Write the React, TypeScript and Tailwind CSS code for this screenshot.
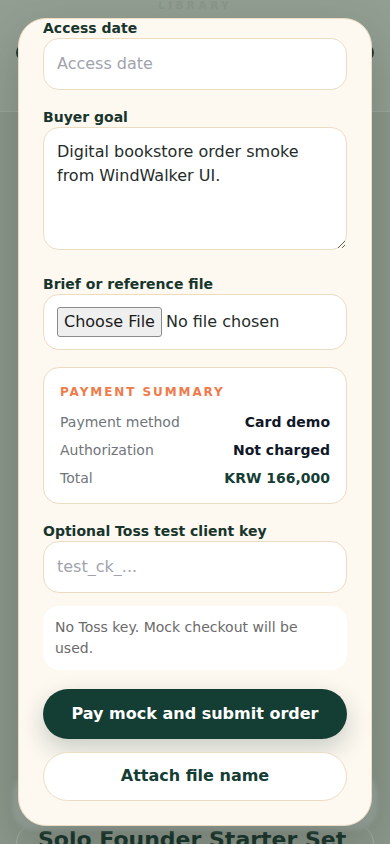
import React from "react";

const labelCls = "block text-sm font-bold leading-5 text-[#17352c]";
const fieldCls =
    "block w-full rounded-2xl border border-[#ecdcc4] bg-white px-[13px] py-[12.8px] text-base leading-6 text-[#1f2d2b] outline-none placeholder:text-[#9fa3ad]";

export default function App() {
    return (
        <div className="relative h-[844px] overflow-hidden bg-[#8b978b] font-['DejaVu_Sans',sans-serif]">
            {/* Page behind the sheet */}
            <header className="h-[114px] border-b border-[#9ba69b] bg-[#929e92] px-4">
                <p className="-mt-[2px] text-center text-[11px] font-bold leading-4 tracking-[0.28em] text-[#8a968a]">LIBRARY</p>
                <div className="mt-[30px] h-[17px] rounded-full bg-[#1f3b31]" />
            </header>
            <div className="pt-[660px]">
                <div className="mx-[13px] h-[58px] rounded-[22px] bg-[#98a49b] blur-[2px]" />
                <div className="mx-4 -mt-[6px] rounded-t-[20px] border-x border-[#a3ada4] px-[21px] pt-[2px]">
                    <h2 className="text-[22px] font-bold leading-7 text-[#1d3a30]">Solo Founder Starter Set</h2>
                </div>
            </div>

            {/* Checkout sheet */}
            <div className="absolute inset-x-0 top-0 px-[18px] pt-[18px]">
                <div className="overflow-hidden rounded-[28px] border border-[#ecdcc4] bg-[#fdf8f0] px-6 pb-6 shadow-[0_20px_50px_rgba(0,0,0,0.18)]">
                    <div className="-mt-px flex flex-col gap-[17px]">
                        <label>
                            <span className={labelCls}>Access date</span>
                            <input type="text" placeholder="Access date" className={fieldCls} />
                        </label>

                        <label>
                            <span className={labelCls}>Buyer goal</span>
                            <textarea
                                rows={4}
                                className={fieldCls + " mb-[7px]"}
                                defaultValue="Digital bookstore order smoke from WindWalker UI."
                            />
                        </label>

                        <label>
                            <span className={labelCls}>Brief or reference file</span>
                            <input
                                type="file"
                                className="block w-full rounded-2xl border border-[#ecdcc4] bg-white px-[13px] py-3 text-base leading-6 text-[#1f2d2b] file:mr-1 file:h-[30px] file:rounded-[3px] file:border file:border-[#8a8a8a] file:bg-[#efefef] file:px-1.5 file:leading-6 file:text-[#1a1a1a]"
                            />
                        </label>

                        {/* Payment summary */}
                        <div className="rounded-2xl border border-[#ecdcc4] bg-white px-4 pt-4 pb-[15px]">
                            <p className="text-xs font-bold leading-4 tracking-[0.16em] text-[#ef7b4b]">PAYMENT SUMMARY</p>
                            <div className="mt-3 flex flex-col gap-2 text-sm leading-5">
                                <div className="flex justify-between">
                                    <span className="text-[#70757a]">Payment method</span>
                                    <span className="font-bold text-[#101828]">Card demo</span>
                                </div>
                                <div className="flex justify-between">
                                    <span className="text-[#70757a]">Authorization</span>
                                    <span className="font-bold text-[#101828]">Not charged</span>
                                </div>
                                <div className="flex justify-between">
                                    <span className="text-[#70757a]">Total</span>
                                    <span className="font-bold text-[#143d33]">KRW 166,000</span>
                                </div>
                            </div>
                        </div>

                        <div className="flex flex-col gap-[13px]">
                            <label>
                                <span className={labelCls}>Optional Toss test client key</span>
                                <input type="text" placeholder="test_ck_..." className={fieldCls} />
                            </label>
                            <p className="rounded-2xl bg-white px-3 py-[11px] text-sm leading-[1.5] text-[#6b6b6b]">
                                No Toss key. Mock checkout will be used.
                            </p>
                        </div>

                        <div className="mt-[2px] flex flex-col gap-[13px]">
                            <button className="h-[50px] w-full rounded-full bg-[#143d33] text-base font-bold text-white shadow-[0_10px_24px_rgba(20,61,51,0.22)]">
                                Pay mock and submit order
                            </button>
                            <button className="h-[49px] w-full rounded-full border border-[#ecdcc4] bg-white text-base font-bold text-[#143d33]">
                                Attach file name
                            </button>
                        </div>
                    </div>
                </div>
            </div>
        </div>
    );
}
